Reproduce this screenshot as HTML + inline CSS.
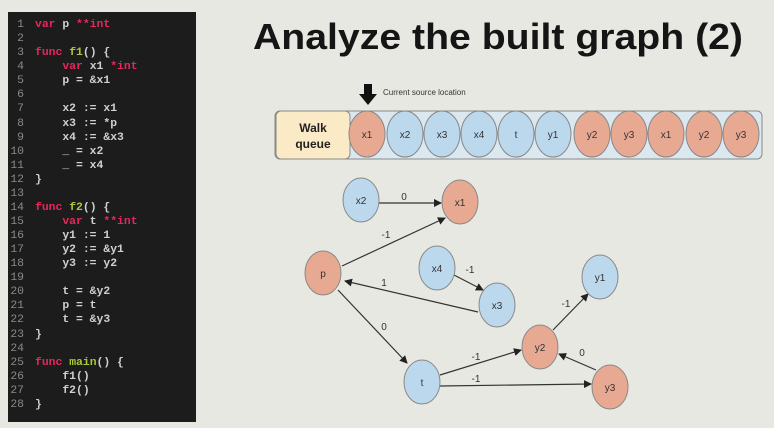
<!DOCTYPE html>
<html><head><meta charset="utf-8"><style>
html,body{margin:0;padding:0;background:#e8e8e3;width:774px;height:428px;overflow:hidden}
</style></head><body>
<svg width="774" height="428" viewBox="0 0 774 428" xmlns="http://www.w3.org/2000/svg">
<defs><marker id="ar" markerWidth="8" markerHeight="8" refX="7" refY="4" orient="auto" markerUnits="userSpaceOnUse"><path d="M0,0 L8,4 L0,8 z" fill="#222"/></marker></defs>
<rect x="0" y="0" width="774" height="428" fill="#e8e8e3"/>
<rect x="8" y="12" width="188" height="410" fill="#1c1c1c"/>
<g font-family="Liberation Mono, monospace" font-size="11.4" font-weight="bold" fill="#d0d0d0">
<g fill="#8a8a8a" text-anchor="end" font-weight="normal">
<text x="24" y="27">1</text><text x="24" y="41">2</text><text x="24" y="55">3</text><text x="24" y="69">4</text><text x="24" y="83">5</text><text x="24" y="97">6</text><text x="24" y="111">7</text><text x="24" y="126">8</text><text x="24" y="140">9</text><text x="24" y="154">10</text><text x="24" y="168">11</text><text x="24" y="182">12</text><text x="24" y="196">13</text><text x="24" y="210">14</text><text x="24" y="224">15</text><text x="24" y="238">16</text><text x="24" y="252">17</text><text x="24" y="266">18</text><text x="24" y="280">19</text><text x="24" y="294">20</text><text x="24" y="308">21</text><text x="24" y="322">22</text><text x="24" y="337">23</text><text x="24" y="351">24</text><text x="24" y="365">25</text><text x="24" y="379">26</text><text x="24" y="393">27</text><text x="24" y="407">28</text>
</g>
<text x="35" y="27" xml:space="preserve"><tspan fill="#e8265e">var</tspan> p <tspan fill="#e8265e">**int</tspan></text>
<text x="35" y="55" xml:space="preserve"><tspan fill="#e8265e">func</tspan> <tspan fill="#a8c83a">f1</tspan>() {</text>
<text x="35" y="69" xml:space="preserve">    <tspan fill="#e8265e">var</tspan> x1 <tspan fill="#e8265e">*int</tspan></text>
<text x="35" y="83" xml:space="preserve">    p = &amp;x1</text>
<text x="35" y="111" xml:space="preserve">    x2 := x1</text>
<text x="35" y="126" xml:space="preserve">    x3 := *p</text>
<text x="35" y="140" xml:space="preserve">    x4 := &amp;x3</text>
<text x="35" y="154" xml:space="preserve">    _ = x2</text>
<text x="35" y="168" xml:space="preserve">    _ = x4</text>
<text x="35" y="182" xml:space="preserve">}</text>
<text x="35" y="210" xml:space="preserve"><tspan fill="#e8265e">func</tspan> <tspan fill="#a8c83a">f2</tspan>() {</text>
<text x="35" y="224" xml:space="preserve">    <tspan fill="#e8265e">var</tspan> t <tspan fill="#e8265e">**int</tspan></text>
<text x="35" y="238" xml:space="preserve">    y1 := 1</text>
<text x="35" y="252" xml:space="preserve">    y2 := &amp;y1</text>
<text x="35" y="266" xml:space="preserve">    y3 := y2</text>
<text x="35" y="294" xml:space="preserve">    t = &amp;y2</text>
<text x="35" y="308" xml:space="preserve">    p = t</text>
<text x="35" y="322" xml:space="preserve">    t = &amp;y3</text>
<text x="35" y="337" xml:space="preserve">}</text>
<text x="35" y="365" xml:space="preserve"><tspan fill="#e8265e">func</tspan> <tspan fill="#a8c83a">main</tspan>() {</text>
<text x="35" y="379" xml:space="preserve">    f1()</text>
<text x="35" y="393" xml:space="preserve">    f2()</text>
<text x="35" y="407" xml:space="preserve">}</text>
</g>
<text x="253" y="49" font-family="Liberation Sans, sans-serif" font-size="36" font-weight="bold" fill="#151515" textLength="490" lengthAdjust="spacingAndGlyphs">Analyze the built graph (2)</text>
<!-- queue -->
<rect x="275" y="111" width="487" height="48" rx="5" fill="#dbe8f0" stroke="#888" stroke-width="1"/>
<rect x="276" y="111" width="74" height="48" rx="5" fill="#fbeac6" stroke="#888" stroke-width="1"/>
<g font-family="Liberation Sans, sans-serif" font-size="12" font-weight="bold" fill="#222" text-anchor="middle"><text x="313" y="132">Walk</text><text x="313" y="148">queue</text></g>
<path d="M364,84 h8 v10 h5 l-9,11 l-9,-11 h5 z" fill="#111"/>
<text x="383" y="95" font-family="Liberation Sans, sans-serif" font-size="8" fill="#333">Current source location</text>
<g stroke="#888" stroke-width="1">
<ellipse cx="367" cy="134" rx="18" ry="23" fill="#e8a992"/>
<ellipse cx="405" cy="134" rx="18" ry="23" fill="#bcd8ec"/>
<ellipse cx="442" cy="134" rx="18" ry="23" fill="#bcd8ec"/>
<ellipse cx="479" cy="134" rx="18" ry="23" fill="#bcd8ec"/>
<ellipse cx="516" cy="134" rx="18" ry="23" fill="#bcd8ec"/>
<ellipse cx="553" cy="134" rx="18" ry="23" fill="#bcd8ec"/>
<ellipse cx="592" cy="134" rx="18" ry="23" fill="#e8a992"/>
<ellipse cx="629" cy="134" rx="18" ry="23" fill="#e8a992"/>
<ellipse cx="666" cy="134" rx="18" ry="23" fill="#e8a992"/>
<ellipse cx="704" cy="134" rx="18" ry="23" fill="#e8a992"/>
<ellipse cx="741" cy="134" rx="18" ry="23" fill="#e8a992"/>
</g>
<g font-family="Liberation Sans, sans-serif" font-size="10" fill="#333" text-anchor="middle">
<text x="367" y="138">x1</text><text x="405" y="138">x2</text><text x="442" y="138">x3</text><text x="479" y="138">x4</text><text x="516" y="138">t</text><text x="553" y="138">y1</text><text x="592" y="138">y2</text><text x="629" y="138">y3</text><text x="666" y="138">x1</text><text x="704" y="138">y2</text><text x="741" y="138">y3</text>
</g>
<!-- graph edges -->
<g stroke="#333" stroke-width="1.2" marker-end="url(#ar)">
<line x1="379" y1="203" x2="441" y2="203"/>
<line x1="342" y1="266" x2="445" y2="218"/>
<line x1="454" y1="275" x2="483" y2="290"/>
<line x1="478" y1="312" x2="345" y2="281"/>
<line x1="338" y1="290" x2="407" y2="363"/>
<line x1="440" y1="375" x2="521" y2="350"/>
<line x1="440" y1="386" x2="591" y2="384"/>
<line x1="553" y1="330" x2="588" y2="294"/>
<line x1="596" y1="370" x2="559" y2="354"/>
</g>
<g stroke="#888" stroke-width="1">
<ellipse cx="361" cy="200" rx="18" ry="22" fill="#bcd8ec"/>
<ellipse cx="460" cy="202" rx="18" ry="22" fill="#e8a992"/>
<ellipse cx="323" cy="273" rx="18" ry="22" fill="#e8a992"/>
<ellipse cx="437" cy="268" rx="18" ry="22" fill="#bcd8ec"/>
<ellipse cx="497" cy="305" rx="18" ry="22" fill="#bcd8ec"/>
<ellipse cx="600" cy="277" rx="18" ry="22" fill="#bcd8ec"/>
<ellipse cx="540" cy="347" rx="18" ry="22" fill="#e8a992"/>
<ellipse cx="422" cy="382" rx="18" ry="22" fill="#bcd8ec"/>
<ellipse cx="610" cy="387" rx="18" ry="22" fill="#e8a992"/>
</g>
<g font-family="Liberation Sans, sans-serif" font-size="10" fill="#333" text-anchor="middle">
<text x="361" y="204">x2</text><text x="460" y="206">x1</text><text x="323" y="277">p</text><text x="437" y="272">x4</text><text x="497" y="309">x3</text><text x="600" y="281">y1</text><text x="540" y="351">y2</text><text x="422" y="386">t</text><text x="610" y="391">y3</text>
<text x="404" y="200">0</text><text x="386" y="238">-1</text><text x="470" y="273">-1</text><text x="384" y="286">1</text><text x="384" y="330">0</text><text x="476" y="360">-1</text><text x="476" y="382">-1</text><text x="566" y="307">-1</text><text x="582" y="356">0</text>
</g>
</svg>
</body></html>
